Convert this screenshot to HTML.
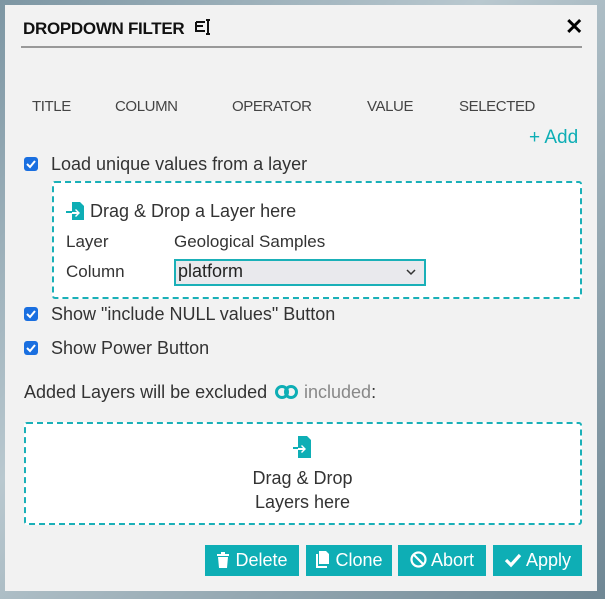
<!DOCTYPE html>
<html><head><meta charset="utf-8"><style>
*{box-sizing:border-box;margin:0;padding:0}
body{width:605px;height:599px;background:linear-gradient(135deg,#7d96a3,#b9c8cf 40%,#6f8794);position:relative;overflow:hidden;font-family:"Liberation Sans",sans-serif;color:#333}
.panel{position:absolute;left:5px;top:5px;width:592px;height:586px;background:#f2f2f2}
.a{position:absolute;white-space:nowrap}
.t{font-size:15px;letter-spacing:-0.4px}
.cb{position:absolute;width:14px;height:14px;background:#1a6fe0;border-radius:3px}
.cb svg{position:absolute;left:1px;top:1px}
.dash{position:absolute;border:2px dashed #1ab0b8;background:#fff;border-radius:3px}
.btn{position:absolute;top:545px;height:31px;background:#0eaeb5;color:#fff;font-size:18px;line-height:31px;text-align:center}
.btn svg{vertical-align:-2px}
</style></head><body>
<div class="panel"></div>
<div class="a" style="left:23px;top:19px;font-size:17px;font-weight:bold;color:#111;letter-spacing:-0.3px">DROPDOWN FILTER</div>
<svg class="a" style="left:194px;top:18px" width="20" height="18" viewBox="0 0 20 18"><path d="M2 4h9M2 4v9h9M2 8h7" stroke="#111" stroke-width="2" fill="none"/><path d="M12 2h4M14 2v14M12 16h4" stroke="#111" stroke-width="2" fill="none"/></svg>
<div class="a" style="left:565px;top:14px;font-size:22px;font-weight:bold;color:#000">✕</div>
<div class="a" style="left:21px;top:46px;width:561px;height:2px;background:#999"></div>
<div class="a t" style="left:32px;top:98px;color:#444">TITLE</div>
<div class="a t" style="left:115px;top:98px;color:#444">COLUMN</div>
<div class="a t" style="left:232px;top:98px;color:#444">OPERATOR</div>
<div class="a t" style="left:367px;top:98px;color:#444">VALUE</div>
<div class="a t" style="left:459px;top:98px;color:#444">SELECTED</div>
<div class="a" style="left:529px;top:127px;font-size:19px;color:#0eaeb5">+ Add</div>
<div class="cb" style="left:24px;top:157px"><svg width="12" height="12"><path d="M2 6l3 3 5-6" stroke="#fff" stroke-width="2" fill="none"/></svg></div>
<div class="a" style="left:51px;top:154px;font-size:18px">Load unique values from a layer</div>
<div class="dash" style="left:52px;top:181px;width:530px;height:118px"></div>
<svg class="a" style="left:66px;top:201px" width="20" height="20" viewBox="0 0 20 20"><path d="M6 1h8l4 4v14H6v-6h5l-2 2 1 1 4-4-4-4-1 1 2 2H6z" fill="#0eaeb5"/><path d="M0 10h6v2H0z" fill="#0eaeb5"/></svg>
<div class="a" style="left:90px;top:201px;font-size:18px">Drag &amp; Drop a Layer here</div>
<div class="a" style="left:66px;top:232px;font-size:17px">Layer</div>
<div class="a" style="left:174px;top:232px;font-size:17px">Geological Samples</div>
<div class="a" style="left:66px;top:262px;font-size:17px">Column</div>
<div class="a" style="left:174px;top:259px;width:252px;height:27px;border:2px solid #1ab0b8;background:#e9e9ed"></div>
<div class="a" style="left:178px;top:261px;font-size:18px;color:#222">platform</div>
<svg class="a" style="left:406px;top:268px" width="10" height="8"><path d="M1 2l4 4 4-4" stroke="#333" stroke-width="1.5" fill="none"/></svg>
<div class="cb" style="left:24px;top:307px"><svg width="12" height="12"><path d="M2 6l3 3 5-6" stroke="#fff" stroke-width="2" fill="none"/></svg></div>
<div class="a" style="left:51px;top:304px;font-size:18px">Show "include NULL values" Button</div>
<div class="cb" style="left:24px;top:341px"><svg width="12" height="12"><path d="M2 6l3 3 5-6" stroke="#fff" stroke-width="2" fill="none"/></svg></div>
<div class="a" style="left:51px;top:338px;font-size:18px">Show Power Button</div>
<div class="a" style="left:24px;top:382px;font-size:18px">Added Layers will be excluded</div>
<svg class="a" style="left:274px;top:384px" width="26" height="16"><circle cx="8" cy="8" r="5.5" stroke="#0eaeb5" stroke-width="3" fill="none"/><circle cx="17" cy="8" r="5.5" stroke="#0eaeb5" stroke-width="3" fill="none"/></svg>
<div class="a" style="left:304px;top:382px;font-size:18px"><span style="color:#888">included</span>:</div>
<div class="dash" style="left:24px;top:422px;width:558px;height:103px"></div>
<svg class="a" style="left:292px;top:435px" width="20" height="24" viewBox="0 0 20 24"><path d="M6 1h9l4 4v18H6v-8h5l-2 2 1 1 4-4-4-4-1 1 2 2H6z" fill="#0eaeb5"/><path d="M1 12h5v2H1z" fill="#0eaeb5"/></svg>
<div class="a" style="left:0;width:605px;text-align:center;top:466px;font-size:18px;line-height:24px">Drag &amp; Drop<br>Layers here</div>
<div class="btn" style="left:205px;width:94px"><svg width="14" height="17"><path d="M1 3h12v2H1zM5 1h4v2H5zM2 6h10l-1 11H3z" fill="#fff"/></svg> Delete</div>
<div class="btn" style="left:306px;width:86px"><svg width="15" height="18"><path d="M4 1h7l3 3v10H4z" fill="#fff"/><path d="M1 4h2v12h9v2H1z" fill="#fff"/></svg> Clone</div>
<div class="btn" style="left:398px;width:88px"><svg width="17" height="17"><circle cx="8.5" cy="8.5" r="7" stroke="#fff" stroke-width="2.2" fill="none"/><path d="M4 4l9 9" stroke="#fff" stroke-width="2.2"/></svg> Abort</div>
<div class="btn" style="left:493px;width:89px"><svg width="18" height="16"><path d="M2 8l5 5 9-10" stroke="#fff" stroke-width="3.2" fill="none"/></svg> Apply</div>
</body></html>
